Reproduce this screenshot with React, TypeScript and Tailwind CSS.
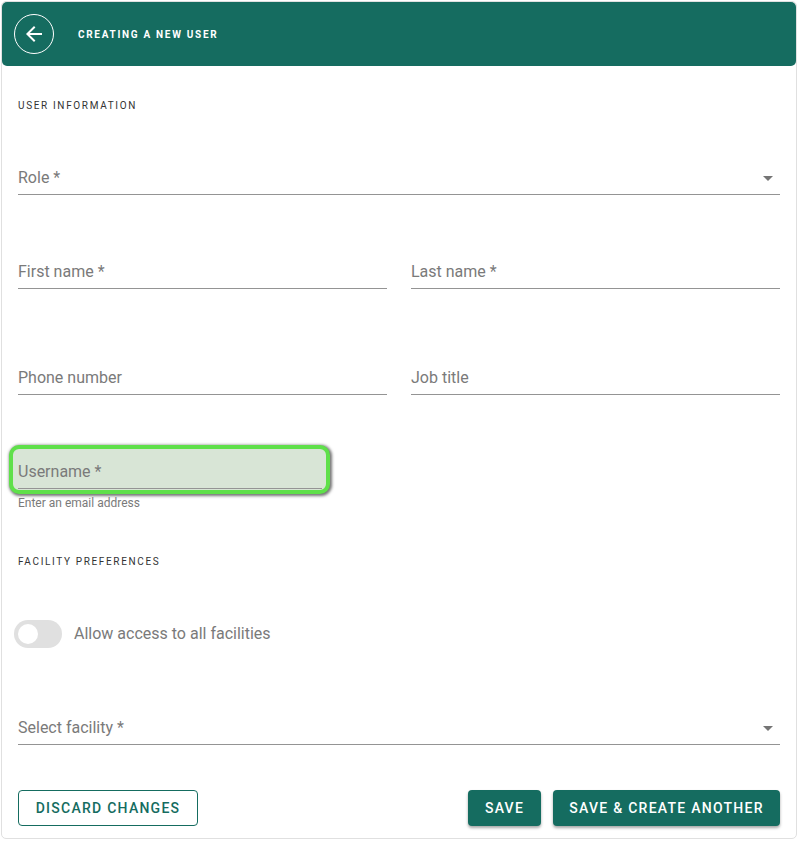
const font = { fontFamily: "Roboto, sans-serif" };

/* ================= ICONS ================= */

const BackIcon = () => (
  <svg width="24" height="24" viewBox="0 0 24 24" fill="#fff">
    <path d="M20 11H7.83l5.59-5.59L12 4l-8 8 8 8 1.41-1.41L7.83 13H20v-2z" />
  </svg>
);

const Caret = () => (
  <svg width="10" height="5" viewBox="0 0 10 5" fill="#757575" className="shrink-0">
    <path d="M0 0l5 5 5-5z" />
  </svg>
);

/* ================= FIELDS ================= */

const Field = ({ label, select }: { label: string; select?: boolean }) => (
  <div className="flex-1 h-[33px] pt-[4px] flex items-start justify-between border-b border-[#949494]">
    <span className="text-base leading-[24px] text-[#7a7a7a]">{label}</span>
    {select && (
      <span className="mt-[10px] mr-[7px] flex">
        <Caret />
      </span>
    )}
  </div>
);

const SectionTitle = ({ children }: { children: React.ReactNode }) => (
  <h2 className="text-[10px] leading-[12px] tracking-[0.165em] text-[#333333]">{children}</h2>
);

/* ================= APP ================= */

export default function App() {
  return (
    <div style={font} className="w-[799px] h-[841px] bg-white pt-px pl-px">
      <div className="w-[796px] h-[838px] border border-[#e0e0e0] rounded-[5px] flex flex-col">
        <header className="h-[64px] bg-[#156c60] rounded-[5px] flex items-center pl-[12px] shrink-0">
          <button className="size-[40px] rounded-full border border-white flex items-center justify-center">
            <BackIcon />
          </button>
          <h1 className="ml-[24px] text-[10px] font-bold tracking-[0.17em] text-white">
            CREATING A NEW USER
          </h1>
        </header>

        <main className="flex-1 px-[16px] flex flex-col">
          <div className="mt-[34px]">
            <SectionTitle>USER INFORMATION</SectionTitle>
          </div>

          <div className="mt-[50px] flex">
            <Field label="Role *" select />
          </div>

          <div className="mt-[61px] flex gap-[24px]">
            <Field label="First name *" />
            <Field label="Last name *" />
          </div>

          <div className="mt-[73px] flex gap-[24px]">
            <Field label="Phone number" />
            <Field label="Job title" />
          </div>

          <div className="mt-[50px] -ml-[9px] w-[321px] h-[49px] bg-[#d8e5d6] border-4 border-[#5fe04a] rounded-[10px] shadow-[1px_1px_3px_1px_rgba(0,0,0,0.55)] pl-[5px] pr-[4px]">
            <div className="h-[40px] pt-[11px] border-b border-[#949494]">
              <span className="block text-base leading-[24px] text-[#7a7a7a]">Username *</span>
            </div>
          </div>
          <p className="mt-[1px] text-xs leading-[16px] text-[#7a7a7a]">Enter an email address</p>

          <div className="mt-[45px]">
            <SectionTitle>FACILITY PREFERENCES</SectionTitle>
          </div>

          <div className="mt-[52px] -ml-[4px] flex items-center">
            <div className="w-[48px] h-[28px] rounded-full bg-[#e0e0e0] flex items-center pl-[4px]">
              <div className="size-[20px] rounded-full bg-white" />
            </div>
            <span className="ml-[12px] text-base text-[#7a7a7a]">Allow access to all facilities</span>
          </div>

          <div className="mt-[64px] flex">
            <Field label="Select facility *" select />
          </div>

          <div className="mt-[45px] flex items-center justify-between">
            <button className="w-[180px] h-[36px] border border-[#156c60] rounded-[4px] text-sm font-medium tracking-[0.09em] text-[#156c60]">
              DISCARD CHANGES
            </button>
            <div className="flex gap-[12px]">
              <button className="w-[73px] h-[36px] bg-[#156c60] rounded-[4px] text-sm font-medium tracking-[0.09em] text-white shadow-[0_2px_3px_rgba(0,0,0,0.35)]">
                SAVE
              </button>
              <button className="w-[227px] h-[36px] bg-[#156c60] rounded-[4px] text-sm font-medium tracking-[0.09em] text-white shadow-[0_2px_3px_rgba(0,0,0,0.35)]">
                SAVE &amp; CREATE ANOTHER
              </button>
            </div>
          </div>
        </main>
      </div>
    </div>
  );
}
